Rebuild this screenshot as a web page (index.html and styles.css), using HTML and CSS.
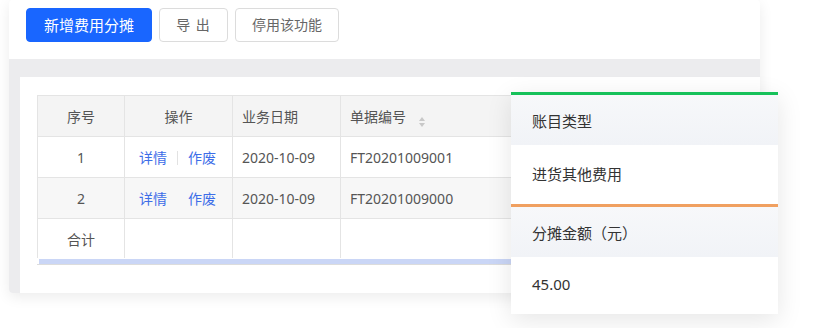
FILE: index.html
```html
<!DOCTYPE html>
<html lang="zh-CN">
<head>
    <meta charset="UTF-8">
    <title>费用分摊</title>
    <link rel="stylesheet" href="styles.css">
</head>
<body>
    <div class="card">
        <div class="toolbar">
            <button class="btn btn-primary">新增费用分摊</button>
            <button class="btn btn-export">导 出</button>
            <button class="btn">停用该功能</button>
        </div>
        <div class="content">
            <div class="panel">
                <div class="table-wrap">
                    <table class="grid">
                        <colgroup>
                            <col class="c-no">
                            <col class="c-op">
                            <col class="c-date">
                            <col class="c-code">
                            <col class="c-rest">
                        </colgroup>
                        <thead>
                            <tr>
                                <th class="center">序号</th>
                                <th class="center">操作</th>
                                <th>业务日期</th>
                                <th>单据编号 <span class="sort"><i class="up"></i><i class="down"></i></span></th>
                                <th></th>
                            </tr>
                        </thead>
                        <tbody>
                            <tr>
                                <td class="center">1</td>
                                <td class="ops"><a>详情</a><span class="sep"></span><a>作废</a></td>
                                <td>2020-10-09</td>
                                <td>FT20201009001</td>
                                <td></td>
                            </tr>
                            <tr class="striped">
                                <td class="center">2</td>
                                <td class="ops"><a>详情</a><span class="sep hidden"></span><a>作废</a></td>
                                <td>2020-10-09</td>
                                <td>FT20201009000</td>
                                <td></td>
                            </tr>
                            <tr class="total">
                                <td class="center">合计</td>
                                <td></td>
                                <td></td>
                                <td></td>
                                <td></td>
                            </tr>
                        </tbody>
                    </table>
                    <div class="scrollbar"></div>
                </div>
            </div>
        </div>
    </div>

    <!-- floating detail card over the table -->
    <div class="detail">
        <div class="detail-group green">
            <div class="detail-head">账目类型</div>
            <div class="detail-value">进货其他费用</div>
        </div>
        <div class="detail-group orange">
            <div class="detail-head">分摊金额（元）</div>
            <div class="detail-value">45.00</div>
        </div>
    </div>
</body>
</html>
```

FILE: styles.css
```css
html, body {
    margin: 0;
    padding: 0;
    background: #ffffff;
    font-family: "Noto Sans", "Noto Sans CJK SC", sans-serif;
    width: 828px;
    height: 328px;
    overflow: hidden;
}

.card {
    margin-left: 9px;
    width: 751px;
    height: 293px;
    background: #ffffff;
    border-radius: 4px;
    box-shadow: 0 4px 14px rgba(0, 0, 0, 0.08);
    display: flex;
    flex-direction: column;
    overflow: hidden;
}

.toolbar {
    height: 59px;
    box-sizing: border-box;
    padding: 8px 0 0 17px;
    display: flex;
    gap: 7px;
    align-items: flex-start;
}

.btn {
    height: 34px;
    padding: 0 16px;
    border: 1px solid #dcdcdc;
    border-radius: 4px;
    background: #ffffff;
    color: #666666;
    font-family: inherit;
    font-size: 14px;
    line-height: 32px;
}

.btn-primary {
    background: #1966ff;
    border-color: #1966ff;
    color: #ffffff;
    font-size: 15px;
    width: 126px;
    padding: 0;
}

.btn-export {
    width: 69px;
    padding: 0;
    letter-spacing: 1px;
}

.content {
    flex: 1;
    background: #ececee;
    padding: 18px 0 0 11px;
    display: flex;
}

.panel {
    flex: 1;
    background: #ffffff;
    padding: 18px 0 0 17px;
    overflow: hidden;
}

.table-wrap {
    width: 720px;
    border-bottom: 1px solid #dcdcdc;
}

.grid {
    border-collapse: collapse;
    width: 720px;
    table-layout: fixed;
    font-size: 14px;
    color: #555555;
}

.c-no { width: 87px; }
.c-op { width: 108px; }
.c-date { width: 108px; }
.c-code { width: 200px; }

.grid th,
.grid td {
    border: 1px solid #e4e4e4;
    padding: 0 0 0 9px;
    text-align: left;
    font-weight: normal;
    white-space: nowrap;
}

.grid th {
    height: 40px;
    background: #f4f4f4;
    color: #555555;
}

.grid td {
    height: 40px;
}

.grid .center {
    text-align: center;
    padding-left: 0;
}

.grid tr.striped td {
    background: #f7f7f7;
}

.grid tr.total td {
    height: 39px;
    border-bottom: none;
}

.ops {
    color: #3d6ee8;
    padding-left: 14px !important;
}

.ops a {
    display: inline-block;
}

.sep {
    display: inline-block;
    width: 1px;
    height: 14px;
    margin: 0 10px;
    background: #e2e2e2;
    vertical-align: -2px;
}

.sep.hidden {
    background: transparent;
}

.sort {
    display: inline-flex;
    flex-direction: column;
    gap: 2px;
    margin-left: 9px;
    vertical-align: 1px;
}

.sort i {
    width: 0;
    height: 0;
    border-left: 3px solid transparent;
    border-right: 3px solid transparent;
}

.sort .up {
    border-bottom: 4px solid #c8c8c8;
}

.sort .down {
    border-top: 4px solid #c8c8c8;
}

.scrollbar {
    height: 5px;
    margin-top: 1px;
    margin-left: 2px;
    background: #cad6f6;
}

.detail {
    position: absolute;
    left: 511px;
    top: 92px;
    width: 267px;
    background: #ffffff;
    box-shadow: 0 6px 24px rgba(0, 0, 0, 0.1);
    font-size: 15px;
    color: #333333;
}

.detail-group.green {
    border-top: 3px solid #16c15a;
}

.detail-group.orange {
    border-top: 3px solid #f0a060;
}

.detail-head {
    height: 50px;
    line-height: 52px;
    padding-left: 21px;
    background: linear-gradient(to bottom, #f7f8fa, #f1f3f7);
}

.detail-value {
    height: 59px;
    line-height: 58px;
    padding-left: 21px;
    background: #ffffff;
}

.detail-group.orange .detail-value {
    height: 57px;
    line-height: 54px;
}
```
